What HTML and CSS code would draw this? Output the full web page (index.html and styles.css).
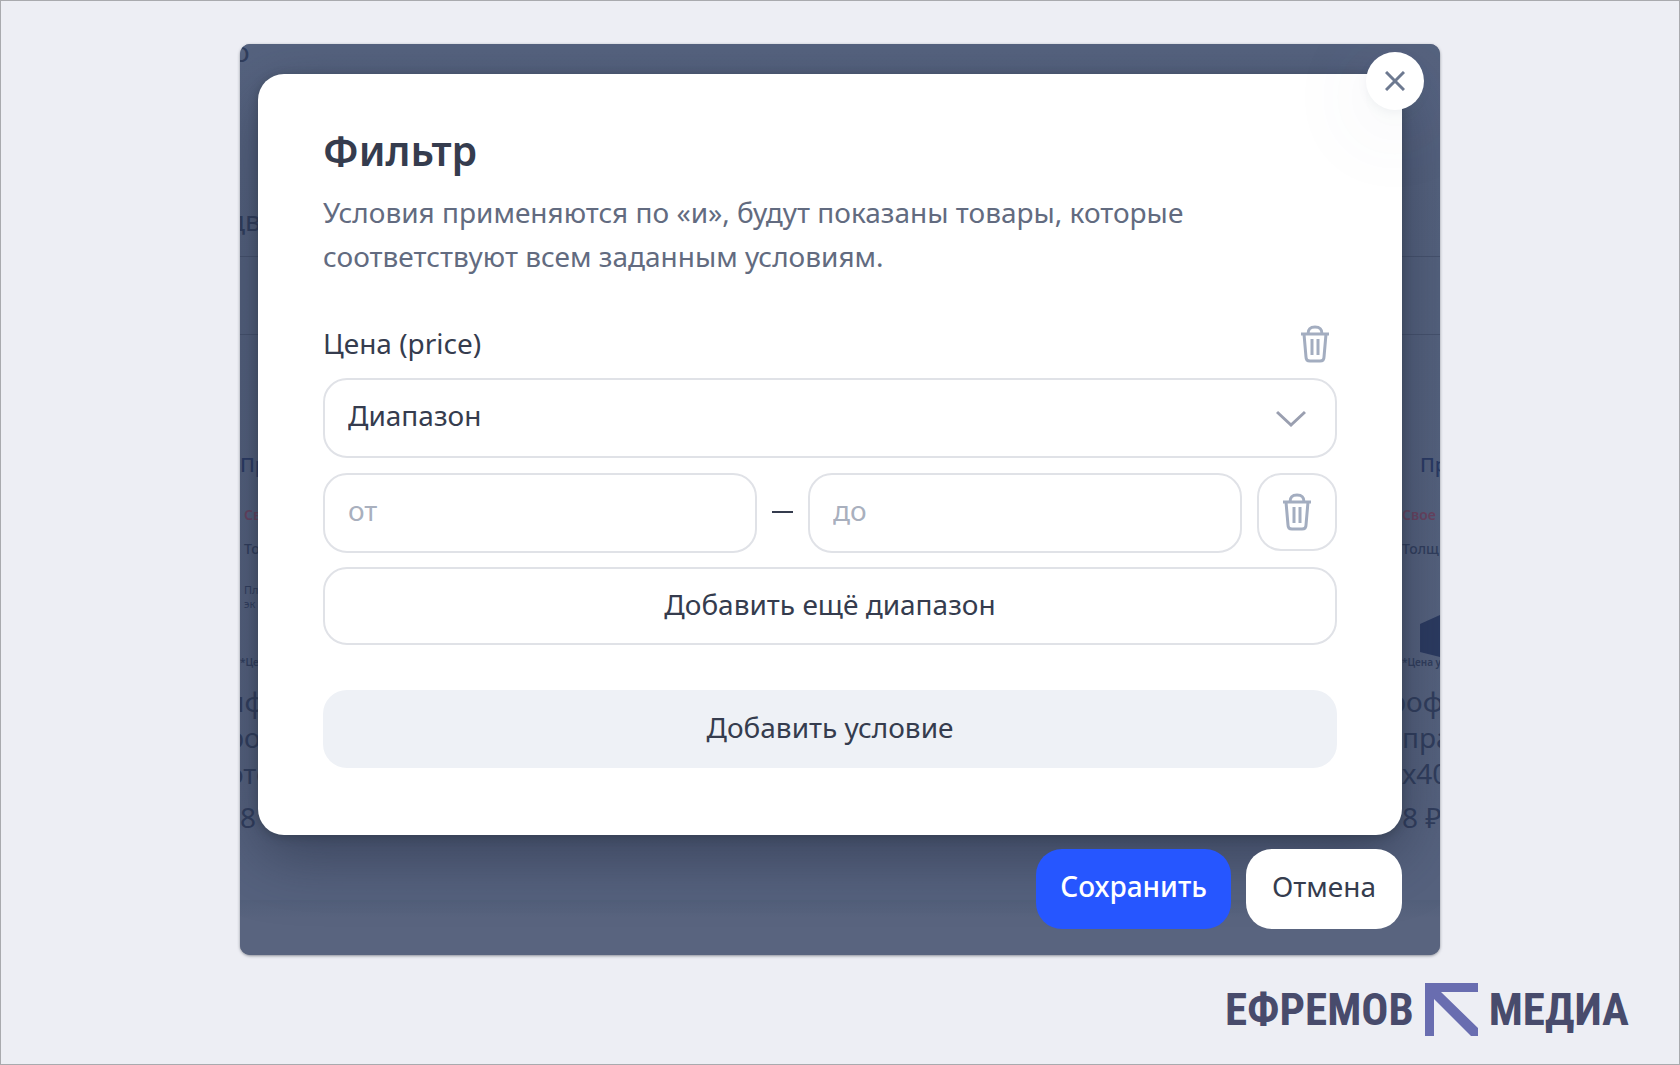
FILE: index.html
```html
<!DOCTYPE html>
<html lang="ru">
<head>
  <meta charset="UTF-8">
  <meta name="viewport" content="width=device-width, initial-scale=1.0">
  <title>Фильтр</title>
  <link rel="stylesheet" href="styles.css">
</head>
<body>
  <main class="screen">
    <!-- catalog page under the overlay -->
    <div class="catalog" aria-hidden="true">
      <div class="catalog-side left">
        <p class="crumb first">о</p>
        <p class="crumb">дв</p>
        <div class="catalog-tabs"></div>
        <p class="banner-title">Пр</p>
        <p class="banner-sale">Свое</p>
        <p class="banner-text">Толщ</p>
        <p class="banner-small">Пл<br>эк</p>
        <p class="banner-note">*Цена</p>
        <p class="product-name">иф</p>
        <p class="product-name">ро</p>
        <p class="product-name">ото</p>
        <p class="product-price">8</p>
      </div>
      <div class="catalog-side right">
        <p class="crumb first"></p>
        <p class="crumb"></p>
        <div class="catalog-tabs"></div>
        <p class="banner-title">Пр</p>
        <p class="banner-sale">Свое п</p>
        <p class="banner-text">Толщ</p>
        <svg class="banner-shape" width="20" height="42" viewBox="0 0 20 42"><path d="M0 9L20 0V42L0 37Z" fill="#2b3a60"/></svg>
        <p class="banner-note">*Цена ука</p>
        <p class="product-name cut">роф</p>
        <p class="product-name">пра</p>
        <p class="product-name">х40</p>
        <p class="product-price">8 ₽</p>
      </div>
    </div>

    <form class="modal" id="filter">
      <button type="button" class="close" aria-label="Закрыть">
        <svg width="20" height="20" viewBox="0 0 20 20"><path d="M1 1L19 19M19 1L1 19" stroke="#6d7990" stroke-width="3" fill="none"/></svg>
      </button>
      <h1>Фильтр</h1>
      <p class="description">Условия применяются по «и», будут показаны товары, которые соответствуют всем заданным условиям.</p>

      <div class="condition-head">
        <label for="type">Цена (price)</label>
        <button type="button" class="remove" aria-label="Удалить условие">
          <svg class="trash" width="28" height="38" viewBox="0 0 28 38"><path d="M0 9H28M7 9C7 4 9 2 14 2S21 4 21 9M3 9L5 32Q5 36 9 36H19Q23 36 23 32L25 9M11 14V30M17 14V30"/></svg>
        </button>
      </div>
      <div class="select">
        <select id="type">
          <option>Диапазон</option>
        </select>
        <svg class="arrow" width="30" height="18" viewBox="0 0 30 18"><path d="M1 2L15 15L29 2" stroke="#9a9fb0" stroke-width="3" fill="none"/></svg>
      </div>
      <div class="range">
        <input type="text" placeholder="от" aria-label="Цена от">
        <span class="dash"></span>
        <input type="text" placeholder="до" aria-label="Цена до">
        <button type="button" class="remove boxed" aria-label="Удалить диапазон">
          <svg class="trash" width="28" height="38" viewBox="0 0 28 38"><path d="M0 9H28M7 9C7 4 9 2 14 2S21 4 21 9M3 9L5 32Q5 36 9 36H19Q23 36 23 32L25 9M11 14V30M17 14V30"/></svg>
        </button>
      </div>
      <button type="button" class="add-range">Добавить ещё диапазон</button>
      <button type="button" class="add-condition">Добавить условие</button>
    </form>

    <div class="actions">
      <button type="submit" form="filter" class="save">Сохранить</button>
      <button type="button" class="cancel">Отмена</button>
    </div>
  </main>

  <footer class="logo">
    <span>ЕФРЕМОВ</span>
    <svg width="53" height="53" viewBox="0 0 53 53"><path d="M0 0H53V9H16L53 45V53H46L9 16V53H0Z" fill="#696db0"/></svg>
    <span>МЕДИА</span>
  </footer>
</body>
</html>
```

FILE: styles.css
```css
* {
  box-sizing: border-box;
}
body {
  font-family: "Noto Sans", sans-serif;
  font-size: 28px;
  margin: 0;
  min-height: 100vh;
  padding: 43px 50px 0;
  background-color: #edeef4;
  border: 1px solid #a9aaae;
  color: #353c4e;
}
h1, p {
  margin: 0;
}
button, input, select {
  font: inherit;
  color: inherit;
}
button {
  cursor: pointer;
}
.screen {
  position: relative;
  max-width: 1200px;
  margin: 0 auto;
  padding: 30px 38px 26px 18px;
  background-color: #59637e;
  border-radius: 10px;
  box-shadow: 0 1px 3px rgba(40, 45, 60, 0.5);
  overflow: hidden;
}

/* catalog */
.catalog {
  position: absolute;
  inset: 0;
  display: flex;
  justify-content: space-between;
  background: linear-gradient(#56637f, #54617d 25%, #56627e 94%, #53607b 94%, #59647f 96%);
  color: #303d5c;
  white-space: nowrap;
}
.catalog-side {
  width: 38px;
  overflow: hidden;
}
.left {
  width: 18px;
}
.crumb {
  height: 36px;
  line-height: 36px;
}
.crumb.first {
  height: 14px;
  line-height: 14px;
  margin-bottom: 144px;
}
.left .crumb {
  text-indent: -12px;
}
.left .crumb.first {
  text-indent: -7px;
}
.catalog-tabs {
  height: 79px;
  margin: 18px 0 120px;
  border: solid #46526d;
  border-width: 1px 0;
}
.banner-title {
  font-size: 20px;
  font-weight: 500;
  line-height: 20px;
  color: #293963;
}
.right .banner-title {
  padding-left: 18px;
}
.banner-sale {
  margin-top: 30px;
  font-size: 14px;
  font-weight: 600;
  line-height: 20px;
  color: #6a4460;
}
.banner-text {
  margin-top: 14px;
  height: 44px;
  font-size: 14px;
  font-weight: 500;
  line-height: 20px;
}
.banner-small {
  height: 72px;
  font-size: 11px;
  line-height: 14px;
}
.left .banner-sale, .left .banner-text, .left .banner-small {
  padding-left: 4px;
}
.banner-shape {
  display: block;
  margin: 32px 0 -2px 18px;
}
.banner-note {
  height: 28px;
  font-size: 10px;
  font-weight: 600;
  line-height: 14px;
}
.product-name {
  line-height: 36px;
}
.left .product-name {
  text-indent: -13px;
}
.product-name.cut {
  text-indent: -13px;
}
.product-price {
  margin-top: 8px;
  line-height: 36px;
}

/* modal */
.modal {
  position: relative;
  padding: 51px 65px 67px;
  background-color: #fff;
  border-radius: 26px;
  box-shadow: 0 20px 60px rgba(30, 38, 60, 0.5), 0 2px 10px rgba(40, 50, 55, 0.4);
}
.close {
  position: absolute;
  top: -22px;
  right: -22px;
  width: 58px;
  height: 58px;
  padding: 0;
  display: flex;
  justify-content: center;
  align-items: center;
  background-color: #fff;
  border: none;
  border-radius: 50%;
  box-shadow: 0 3px 10px rgba(80, 95, 130, 0.07), 0 16px 90px rgba(80, 95, 130, 0.12);
}
h1 {
  font-size: 41px;
  font-weight: 600;
  line-height: 50px;
}
.description {
  margin-top: 15px;
  line-height: 44px;
  color: #626b80;
}
.condition-head {
  display: flex;
  justify-content: space-between;
  align-items: center;
  height: 44px;
  margin: 44px 0 12px;
}
.condition-head label {
  padding-bottom: 2px;
}
.remove {
  display: flex;
  justify-content: center;
  align-items: center;
  padding: 0 8px;
  background: none;
  border: none;
}
.trash path {
  fill: none;
  stroke: #a3adc0;
  stroke-width: 3;
}
.select {
  position: relative;
}
select, input {
  width: 100%;
  height: 80px;
  padding: 0 23px 6px;
  background-color: #fff;
  border: 2px solid #e0e2e7;
  border-radius: 24px;
}
select {
  display: block;
  appearance: none;
}
.arrow {
  position: absolute;
  top: 32px;
  right: 31px;
  pointer-events: none;
}
.range {
  display: flex;
  gap: 15px;
  margin: 15px 0 14px;
}
.range input {
  flex: 1;
  min-width: 0;
}
input::placeholder {
  color: #a9b0be;
  opacity: 1;
}
.dash {
  flex: none;
  width: 21px;
  height: 2px;
  margin-top: 38px;
  background-color: #353c4e;
}
.boxed {
  flex: none;
  width: 80px;
  height: 78px;
  border: 2px solid #e0e2e7;
  border-radius: 24px;
}
.add-range, .add-condition {
  display: block;
  width: 100%;
  height: 78px;
  padding: 0 0 4px;
  border: 2px solid #e0e2e7;
  border-radius: 24px;
  background-color: #fff;
}
.add-condition {
  margin-top: 45px;
  border: none;
  background-color: #eef1f6;
}
.actions {
  position: relative;
  display: flex;
  justify-content: flex-end;
  gap: 15px;
  margin-top: 14px;
}
.actions button {
  height: 80px;
  padding: 0 26px 6px;
  border: none;
  border-radius: 26px;
  background-color: #fff;
}
.actions .save {
  padding: 0 24px 6px;
  background-color: #2656ff;
  color: #fff;
  font-weight: 500;
}

.logo {
  display: flex;
  justify-content: flex-end;
  align-items: center;
  gap: 11px;
  margin-top: 28px;
  font-family: "Liberation Sans Narrow", "Roboto Condensed", "DejaVu Sans Condensed", sans-serif;
  font-size: 45px;
  font-weight: bold;
  line-height: 53px;
  color: #484b6c;
}
```
